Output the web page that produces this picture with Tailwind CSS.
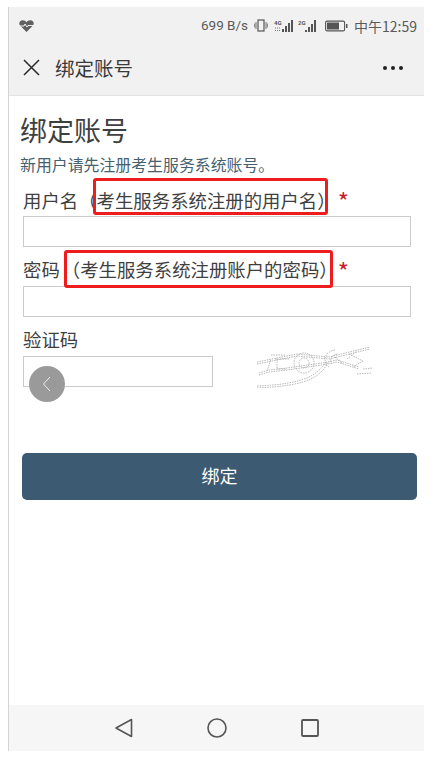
<!DOCTYPE html>
<html lang="zh">
<head>
<meta charset="utf-8">
<script src="https://cdn.jsdelivr.net/npm/@tailwindcss/browser@4"></script>
</head>
<body class="bg-white">
<div class="relative ml-2 mt-[7px] flex h-[744px] w-[416px] flex-col overflow-hidden border-l border-[#d4d4d4] bg-white font-['Noto_Sans_CJK_SC','Noto_Sans',sans-serif] text-[#3f3f3f]">
  <!-- status bar -->
  <div class="flex h-[37px] items-center bg-[#f1f1f1] pl-[10px] pr-[7px] text-[#5a5a5a]">
    <svg class="h-[12px] w-[15px]" viewBox="0 0 15 12"><path d="M7.5 12 L1 5.6 C-.6 3.4.6.4 3.6.3 5.3.2 6.7 1 7.5 2.2 8.3 1 9.7.2 11.4.3 14.4.4 15.6 3.4 14 5.6Z" fill="#606060"/><path d="M0 6h5l1-2 2 3 1-1.5h6" stroke="#f1f1f1" stroke-width="1" fill="none"/></svg>
    <div class="ml-auto flex items-center text-[13.5px] leading-none font-['Roboto',sans-serif]">
      <span>699 B/s</span>
      <svg class="ml-[6px] h-[13px] w-[14px]" viewBox="0 0 14 13" fill="none" stroke="#555"><rect x="4" y="1" width="6" height="11" stroke-width="1.2"/><path d="M2 3v7M.7 4.5v4M12 3v7M13.3 4.5v4" stroke-width=".8"/></svg>
      <svg class="ml-[6px] h-[14px] w-[20px]" viewBox="0 0 20 14"><text x="0" y="6" font-size="6" font-weight="700" fill="#555" font-family="Roboto">4G</text><path d="M1 9h5M1 11.5h5" stroke="#777" stroke-dasharray="1 1"/><rect x="8" y="10" width="2" height="3" fill="#555"/><rect x="11" y="7" width="2" height="6" fill="#555"/><rect x="14" y="4" width="2" height="9" fill="#555"/><rect x="17" y="1" width="2" height="12" fill="#555"/></svg>
      <svg class="ml-[4px] h-[14px] w-[20px]" viewBox="0 0 20 14"><text x="0" y="6" font-size="6" font-weight="700" fill="#555" font-family="Roboto">2G</text><rect x="7" y="11" width="2" height="2" fill="#555"/><rect x="10" y="8" width="2" height="5" fill="#555"/><rect x="13" y="5" width="2" height="8" fill="#555"/><rect x="16" y="1" width="2" height="12" fill="#555"/></svg>
      <svg class="ml-[7px] h-[12px] w-[23px]" viewBox="0 0 23 12"><rect x=".6" y="1.1" width="19" height="9.8" rx="1.5" fill="none" stroke="#555" stroke-width="1.1"/><rect x="2" y="2.5" width="12" height="7" fill="#555"/><rect x="21" y="4" width="1.5" height="4" fill="#555"/></svg>
      <span class="ml-[6px] font-['Noto_Sans_CJK_SC',sans-serif] text-[14px]">中午12:59</span>
    </div>
  </div>
  <!-- title bar -->
  <div class="flex h-[52px] items-center border-b border-[#e3e3e3] bg-[#f1f1f1] pb-[4px] pl-[14px] pr-[21px]">
    <svg class="h-[17px] w-[17px]" viewBox="0 0 17 17" fill="none" stroke="#2a2a2a" stroke-width="1.5"><path d="M1 1l15 15M16 1L1 16"/></svg>
    <span class="ml-[15px] text-[19.5px] leading-none text-[#3a3a3a]">绑定账号</span>
    <div class="ml-auto flex gap-[4px]">
      <span class="h-[4px] w-[4px] rounded-full bg-[#222]"></span>
      <span class="h-[4px] w-[4px] rounded-full bg-[#222]"></span>
      <span class="h-[4px] w-[4px] rounded-full bg-[#222]"></span>
    </div>
  </div>
  <!-- content -->
  <div class="flex flex-1 flex-col pl-[11px]">
    <h1 class="mt-[16px] h-[36px] text-[27px] leading-[36px] font-normal text-[#3f3f3f]">绑定账号</h1>
    <p class="mt-[6px] h-[22px] text-[15.9px] leading-[22px] text-[#46606f]">新用户请先注册考生服务系统账号。</p>
    <div class="ml-[3px] mt-[3px] flex w-[388px] flex-col">
      <label class="flex h-[37px] items-center pt-[5px] text-[18.4px] leading-none"><span>用户名（考生服务系统注册的用户名）</span><span class="ml-[2px] mt-[2px] text-[24px] leading-none text-[#c8202a]">*</span></label>
      <div class="h-[31px] border border-[#cbcbcb] bg-white"></div>
      <label class="mt-[1px] flex h-[38px] items-center pt-[5px] text-[18.4px] leading-none"><span class="mr-[2px]">密码</span><span>（考生服务系统注册账户的密码）</span><span class="mt-[2px] text-[24px] leading-none text-[#c8202a]">*</span></label>
      <div class="h-[31px] border border-[#cbcbcb] bg-white"></div>
      <label class="mt-[1px] flex h-[38px] items-center pt-[4px] text-[18.4px] leading-none">验证码</label>
      <div class="flex items-start">
        <div class="h-[31px] w-[190px] border border-[#cbcbcb] bg-white"></div>
        <svg class="ml-[44px] -mt-[9px] h-[41px] w-[116px]" viewBox="0 0 116 41" fill="none" stroke="#b0b0b0" stroke-width=".9" stroke-dasharray="1.5 1">
          <path d="M0 15 L40 7 L72 10 L113 0"/><path d="M0 17 L40 9 L72 12 L113 2"/>
          <path d="M2 26 L12 23 L30 21 L65 16 L80 13 L102 20"/><path d="M2 28 L12 25 L30 23 L65 18 L80 15 L102 22"/>
          <path d="M0 39 C24 38 42 35 52 30 C60 26 66 20 69 15"/><path d="M0 41 C24 40 44 37 54 32 C62 28 68 22 71 15"/>
          <path d="M14 8 L28 8 M18 12 L32 12 M10 24 L14 12 M20 12 L20 22 L30 22"/>
          <circle cx="47" cy="16" r="10"/><circle cx="47" cy="16" r="5"/>
          <path d="M78 3 C66 5 66 16 72 20 M80 7 C74 8 72 14 75 17 M78 10 L85 16"/>
          <path d="M92 7 L106 14 L96 20 M106 22 L116 21 M100 27 L114 26 M90 12 L100 4"/>
        </svg>
      </div>
    </div>
    <button class="ml-[2px] mt-[65px] h-[47px] w-[395px] rounded-[5px] bg-[#3c5a72] pb-[4px] text-[18px] leading-none text-white">绑定</button>
  </div>
  <!-- nav bar -->
  <div class="flex h-[46px] items-center justify-center gap-[74px] bg-[#f6f6f6]">
    <svg class="h-[20px] w-[18px]" viewBox="0 0 18 20" fill="none" stroke="#555" stroke-width="1.6" stroke-linejoin="round"><path d="M16.5 1.5v17L1 10z"/></svg>
    <svg class="h-[20px] w-[20px]" viewBox="0 0 20 20" fill="none" stroke="#555" stroke-width="1.6"><circle cx="10" cy="10" r="9"/></svg>
    <svg class="h-[18px] w-[18px]" viewBox="0 0 18 18" fill="none" stroke="#555" stroke-width="1.8"><rect x="1" y="1" width="16" height="16" rx="1"/></svg>
  </div>
  <!-- annotations -->
  <div class="absolute left-[84px] top-[171px] h-[37px] w-[235px] rounded-[3px] border-[3px] border-[#ee1c1c]"></div>
  <div class="absolute left-[55px] top-[243px] h-[38px] w-[269px] rounded-[3px] border-[3px] border-[#ee1c1c]"></div>
  <!-- floating back -->
  <div class="absolute left-[20px] top-[359px] flex h-[36px] w-[36px] items-center justify-center rounded-full bg-[#9a9a9a]">
    <svg class="h-[16px] w-[10px]" viewBox="0 0 10 16" fill="none" stroke="#f4f4f4" stroke-width="1"><path d="M8 1L1.5 8 8 15"/></svg>
  </div>
</div>
</body>
</html>
